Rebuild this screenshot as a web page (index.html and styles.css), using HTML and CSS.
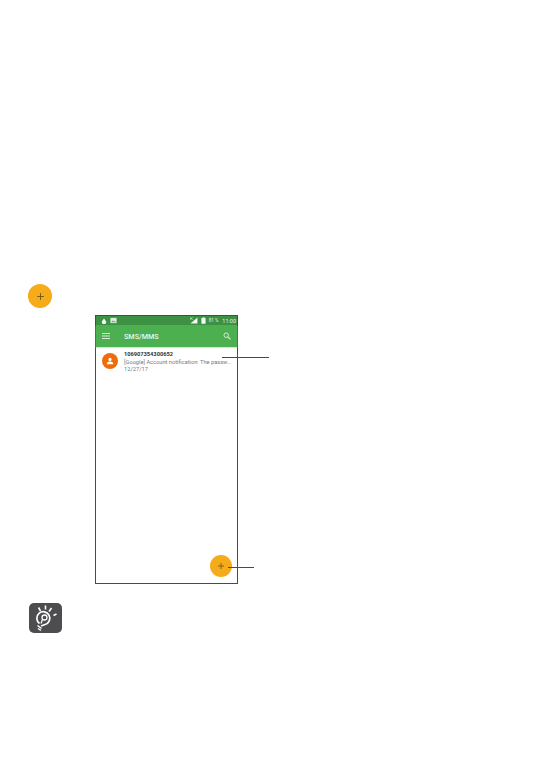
FILE: index.html
```html
<!DOCTYPE html>
<html lang="en">
<head>
    <meta charset="UTF-8">
    <meta name="viewport" content="width=device-width, initial-scale=1.0">
    <title>SMS/MMS</title>
    <link rel="stylesheet" href="styles.css">
</head>
<body>
    <div class="page">
        <div class="add-btn add-btn-top">
            <svg viewBox="0 0 10 10" width="9" height="9"><path d="M5 1.2v7.6M1.2 5h7.6" stroke="#6b5320" stroke-width="1" fill="none"/></svg>
        </div>

        <div class="phone">
            <div class="status-bar">
                <div class="status-left">
                    <svg viewBox="0 0 8 8" width="6" height="6"><path d="M4 .5 6.6 4.2A2.9 2.9 0 1 1 1.4 4.2Z" fill="#f2f8f2"/></svg>
                    <svg viewBox="0 0 8 8" width="7" height="7"><path d="M.5 1h7v6h-7Z" fill="#dfeee0"/><path d="M1.500 6 3.200 3.600 4.600 5.200 5.500 4.300 6.600 6Z" fill="#6fb172"/></svg>
                </div>
                <div class="status-right">
                    <svg viewBox="0 0 10 8" width="9" height="7"><path d="M9.500.5v7H1.500Z" fill="#f2f8f2"/><path d="M1 .5 4 3M4 .5 1 3" stroke="#f2f8f2" stroke-width=".7"/></svg>
                    <svg class="battery" viewBox="0 0 6 8" width="5" height="7"><path d="M2 0h2v1h1.500v7H.5V1H2Z" fill="#f2f8f2"/></svg>
                    <span class="pct">81 %</span>
                    <span class="clock">11:00</span>
                </div>
            </div>
            <div class="app-bar">
                <svg viewBox="0 0 8 6" width="8" height="6"><path d="M0 .5h8M0 3h8M0 5.500h8" stroke="#e6f3e6" stroke-width=".9"/></svg>
                <span class="app-title">SMS/MMS</span>
                <svg class="search" viewBox="0 0 10 10" width="8" height="8"><circle cx="4" cy="4" r="2.800" fill="none" stroke="#e6f3e6" stroke-width="1.100"/><path d="M6 6 9.300 9.300" stroke="#e6f3e6" stroke-width="1.300"/></svg>
            </div>
            <div class="msg">
                <div class="avatar">
                    <svg viewBox="0 0 10 10" width="8" height="8"><circle cx="5" cy="3" r="2" fill="#fff"/><path d="M1.200 9V7.800C1.200 6.300 3.500 5.700 5 5.700S8.800 6.300 8.800 7.800V9Z" fill="#fff"/></svg>
                </div>
                <div class="msg-body">
                    <div class="msg-from">106907354300652</div>
                    <div class="msg-text">[Google] Account notification: The passw...</div>
                    <div class="msg-date">12/27/17</div>
                </div>
            </div>
            <div class="leader leader-msg"></div>
            <div class="add-btn add-btn-fab">
                <svg viewBox="0 0 10 10" width="8" height="8"><path d="M5 1.200v7.600M1.200 5h7.600" stroke="#6b5320" stroke-width="1" fill="none"/></svg>
            </div>
            <div class="leader leader-fab"></div>
        </div>

        <div class="tip">
            <svg viewBox="0 0 33 30" width="33" height="30">
                <g stroke="#fff" fill="none">
                    <path d="M9.500 4.500 11.500 8M16.500 2.500V6.500M22.500 5 20 8.500M27.500 11 24.500 12.500" stroke-width="1.600"/>
                    <path d="M10.500 20.500A6.500 6.500 0 1 1 16 21.500L12 23" stroke-width="1.700"/>
                    <circle cx="15.500" cy="14.500" r="2.500" stroke-width="1.300"/>
                    <path d="M13.500 16.500 12 20.500" stroke-width="1.300"/>
                    <path d="M8.500 22.500 12.500 25.500M9 25.500 12 27.500" stroke-width="1.500"/>
                </g>
            </svg>
        </div>
    </div>
</body>
</html>
```

FILE: styles.css
```css
body{
    margin: 0;
    background: #fff;
    font-family: Roboto, "Liberation Sans", sans-serif;
}
.page{
    padding-top: 284px;
    min-height: 765px;
    box-sizing: border-box;
}
.add-btn{
    width: 24px;
    height: 24px;
    border-radius: 50%;
    background: #f6ab1a;
    display: flex;
    align-items: center;
    justify-content: center;
}
.add-btn-top{
    margin-left: 28px;
}
.phone{
    width: 143px;
    height: 269px;
    margin-left: 95px;
    margin-top: 7px;
    border: 1px solid #4a4a4a;
    box-sizing: border-box;
    position: relative;
}
.status-bar{
    height: 9px;
    background: #3c9142;
    display: flex;
    justify-content: space-between;
    align-items: center;
    padding: 0 1px 0 5px;
    color: #e9f3e9;
}
.status-left, .status-right{
    display: flex;
    align-items: center;
    gap: 3px;
}
.pct{
    font-size: 4.500px;
}
.clock{
    font-size: 5.500px;
    margin-left: 1px;
}
.app-bar{
    height: 22px;
    background: #4caf50;
    display: flex;
    align-items: center;
    padding: 0 6px;
    box-shadow: 0 1px 1px #ddd;
}
.app-title{
    color: #eef7ee;
    font-size: 7.200px;
    font-weight: 500;
    margin-left: 14px;
    flex: 1;
}
.msg{
    display: flex;
    padding: 4px 6px 0 6px;
}
.avatar{
    flex: none;
    width: 16px;
    height: 16px;
    margin-top: 2px;
    border-radius: 50%;
    background: #ef6c0a;
    display: flex;
    align-items: center;
    justify-content: center;
}
.msg-body{
    margin-left: 6px;
    line-height: 7.500px;
    font-size: 5.700px;
    color: #7a7a7a;
    white-space: nowrap;
}
.msg-from{
    color: #333;
    font-weight: 700;
}
.leader{
    position: absolute;
    height: 1px;
    background: #4a4a4a;
}
.leader-msg{
    left: 126px;
    top: 41px;
    width: 47px;
}
.leader-fab{
    left: 132px;
    top: 251px;
    width: 26px;
}
.add-btn-fab{
    position: absolute;
    left: 114px;
    top: 239px;
    width: 22px;
    height: 22px;
}
.tip{
    width: 33px;
    height: 30px;
    margin: 19px 0 0 29px;
    background: #4d4d4f;
    border-radius: 5px;
}
.tip svg{
    display: block;
}
```
